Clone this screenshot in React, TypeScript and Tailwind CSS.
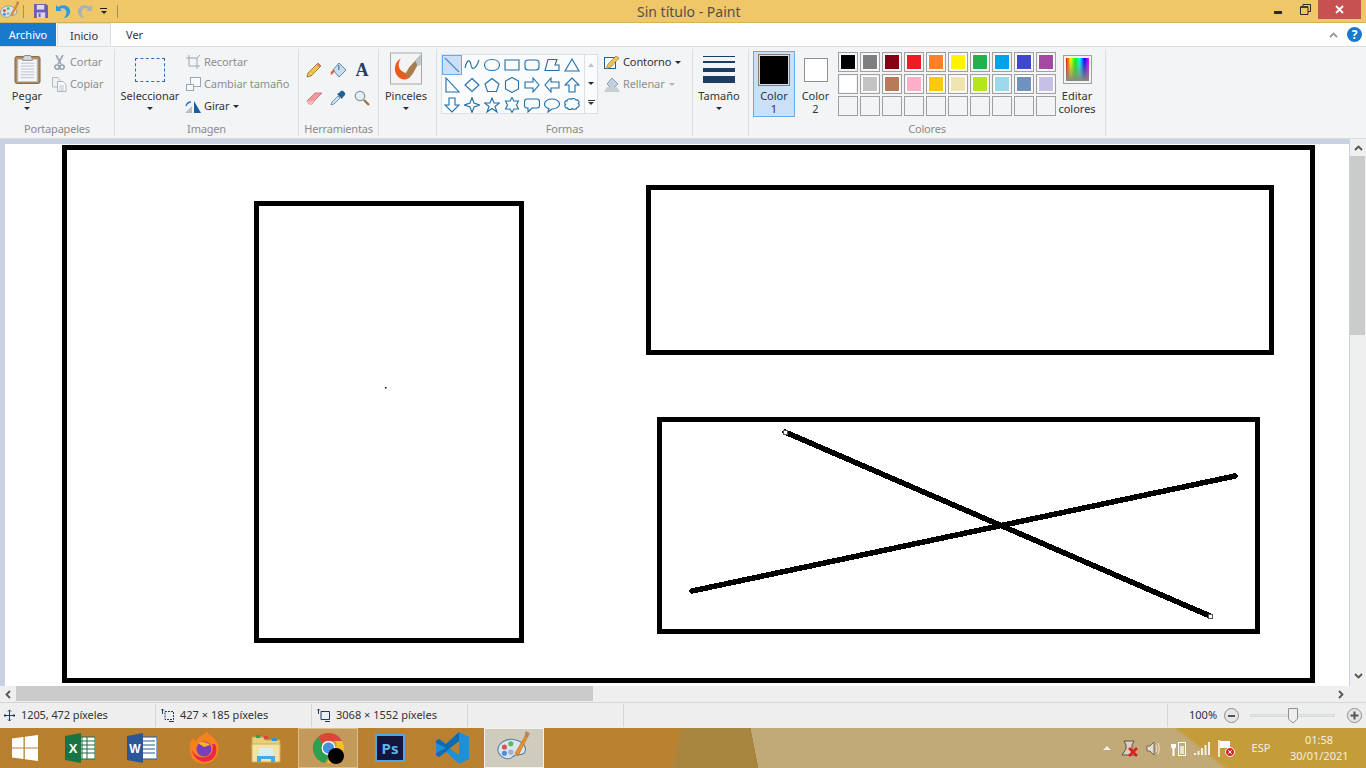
import type { ReactNode } from "react";

const PALETTE_TOP = ["#000000", "#7f7f7f", "#880015", "#ed1c24", "#ff7f27", "#fff200", "#22b14c", "#00a2e8", "#3f48cc", "#a349a4"];
const PALETTE_MID = ["#ffffff", "#c3c3c3", "#b97a57", "#ffaec9", "#ffc90e", "#efe4b0", "#b5e61d", "#99d9ea", "#7092be", "#c8bfe7"];

const SHAPES = [
  "M1 1L15 15",
  "M1 11C3 2 6 2 7 8C8 14 12 12 15 3",
  "M8 2.5C12 2.5 15.5 4.5 15.5 8C15.5 11.5 12 13.5 8 13.5C4 13.5 .5 11.5 .5 8C.5 4.5 4 2.5 8 2.5Z",
  "M1 3H15V13H1Z",
  "M4 3H12Q15 3 15 6V10Q15 13 12 13H4Q1 13 1 10V6Q1 3 4 3Z",
  "M1 13.5L4 2.5H13L11 8H15V13.5Z",
  "M8 2L15 14H1Z",
  "M2 1V15H15Z",
  "M8 1.5L15 8L8 14.5L1 8Z",
  "M8 1.5L15 7L12.5 14.5H3.5L1 7Z",
  "M8 .5L14.5 4V12L8 15.5L1.5 12V4Z",
  "M1 5H9V1L15 8L9 15V11H1Z",
  "M15 5H7V1L1 8L7 15V11H15Z",
  "M8 1L15 8H11V15H5V8H1Z",
  "M5 1H11V8H15L8 15L1 8H5Z",
  "M8 .5L10 6L15.5 8L10 10L8 15.5L6 10L.5 8L6 6Z",
  "M8 1L10 6H15.5L11 9.5L13 15L8 11.5L3 15L5 9.5L.5 6H6Z",
  "M8 .5L10 4H14.5L12.5 8L14.5 12H10L8 15.5L6 12H1.5L3.5 8L1.5 4H6Z",
  "M3 2H13Q15.5 2 15.5 4.5V8.5Q15.5 11 13 11H8L4 15V11H3Q.5 11 .5 8.5V4.5Q.5 2 3 2Z",
  "M8 2C12 2 15.5 4 15.5 7C15.5 10 12 12 8 12L4 15L5 11.5C2.5 11 .5 9 .5 7C.5 4 4 2 8 2Z",
  "M3 4C3 2 6 1 7 2.5C8 1 11 1 12 3C14 2.5 16 5 14.5 6.5C16 8 15 10.5 13 10.5C12.5 12.5 9.5 13 8.5 11.5C7 13 4 13 3.5 11C1.5 11.5 0 9 1.5 7.5C0 6 1 3.5 3 4Z",
];

function Caret({ color = "border-t-[#2b2b2b]" }: { color?: string }) {
  return <span className={`inline-block h-0 w-0 border-x-[3px] border-t-[3px] border-x-transparent ${color}`} />;
}

function Group({ label, width, children }: { label: string; width: string; children: ReactNode }) {
  return (
    <div className={`${width} flex h-[87px] shrink-0 flex-col border-r border-[#dcdddf]`}>
      <div className="flex h-[73px]">{children}</div>
      <div className="text-center text-[11px] leading-[14px] tracking-[-0.2px] text-[#8b8b8b]">{label}</div>
    </div>
  );
}

function LargeButton({ label, width, icon }: { label: string; width: string; icon: ReactNode }) {
  return (
    <div className={`${width} flex shrink-0 flex-col items-center`}>
      <div className="flex h-[40px] items-center justify-center">{icon}</div>
      <div className="h-[14px] text-[11px] leading-[14px] text-[#333333]">{label}</div>
      <div className="flex h-[10px] items-center">
        <Caret />
      </div>
    </div>
  );
}

function SmallRow({ icon, label, muted, caret }: { icon: ReactNode; label: string; muted?: boolean; caret?: boolean }) {
  return (
    <div className="flex h-[22px] items-center">
      <span className="flex w-[16px] shrink-0 items-center justify-center">{icon}</span>
      <span className={`ml-[3px] text-[11px] leading-[14px] tracking-[-0.1px] ${muted ? "text-[#8e8e8e]" : "text-[#333333]"}`}>{label}</span>
      {caret && (
        <span className="ml-[4px] flex items-center">
          <Caret color={muted ? "border-t-[#b5b5b5]" : "border-t-[#2b2b2b]"} />
        </span>
      )}
    </div>
  );
}

function Swatch({ color }: { color?: string }) {
  return (
    <div className="h-[20px] w-[20px] border border-[#a0a0a0] bg-[#f3f4f6] p-px">
      {color && <div className="h-full w-full border border-white" style={{ backgroundColor: color }} />}
    </div>
  );
}

function PaintIcon({ size }: { size: number }) {
  return (
    <svg width={size} height={size} viewBox="0 0 32 32">
      <path d="M1 19C0 12 8 7 15 8C23 9 29 14 26 20C24 24 18 21 15 24C12 28 3 26 1 19Z" fill="#d9e6f0" stroke="#5a7f9e" strokeWidth="1" />
      <circle cx="7" cy="15" r="2.4" fill="#d9534f" />
      <circle cx="13" cy="12" r="2.4" fill="#5cb85c" />
      <circle cx="7" cy="21" r="2.4" fill="#4a90d9" />
      <circle cx="13" cy="20" r="2.6" fill="#9fb4c7" />
      <path d="M17 21L27 4L29 5L20 23Z" fill="#e8912d" stroke="#b5661a" strokeWidth=".6" />
      <path d="M26 5L27 0L31 2L29 6Z" fill="#b8845a" />
    </svg>
  );
}

function ChromeIcon() {
  return (
    <svg width="34" height="34" viewBox="0 0 34 34">
      <g transform="translate(2 0)">
        <path d="M15.5 2A15 15 0 0 1 29 10H16A7 7 0 0 0 9 13L5 6A15 15 0 0 1 15.5 2Z" fill="#d8473a" />
        <path d="M5 6L12 18A7 7 0 0 0 17 23.5L12 32A15 15 0 0 1 5 6Z" fill="#2f9e4f" />
        <path d="M29 10A15 15 0 0 1 14 32L21 20A7 7 0 0 0 22 10Z" fill="#f3c11b" />
        <circle cx="15.5" cy="17" r="6.3" fill="#4a8fe0" stroke="#ffffff" strokeWidth="1.3" />
      </g>
      <circle cx="25" cy="25" r="8" fill="#000000" />
    </svg>
  );
}

export default function App() {
  return (
    <div className="flex h-[768px] w-[1366px] flex-col overflow-hidden bg-white font-['Noto_Sans',sans-serif]">
      {/* Title bar */}
      <div className="flex h-[23px] shrink-0 items-start border-b border-[#d8b058] bg-[#efc768]">
        <div className="flex h-[22px] w-[126px] items-center">
          <PaintIcon size={20} />
          <span className="ml-[3px] h-[13px] w-px bg-[#a89055]" />
          <svg className="ml-[10px]" width="14" height="14" viewBox="0 0 15 15">
            <path d="M0 0H13L15 2V15H0Z" fill="#6a5fb0" />
            <rect x="3" y="1" width="8" height="5" fill="#ddd9ee" />
            <rect x="3" y="9" width="9" height="6" fill="#d7d3ea" />
            <rect x="5" y="10" width="2" height="4" fill="#6a5fb0" />
          </svg>
          <svg className="ml-[8px]" width="15" height="15" viewBox="0 0 15 15">
            <path d="M0 1V7H6L4 5C7 3 12 5 10 11L8 14C13 13 16 8 13 4C10 0 5 1 2 3Z" fill="#2c9be0" />
          </svg>
          <svg className="ml-[6px]" width="15" height="15" viewBox="0 0 15 15">
            <path d="M15 1V7H9L11 5C8 3 3 5 5 11L7 14C2 13 -1 8 2 4C5 0 10 1 13 3Z" fill="#a5b2bb" />
          </svg>
          <span className="ml-[8px] flex flex-col items-center gap-[2px]">
            <span className="h-px w-[7px] bg-[#222222]" />
            <Caret color="border-t-[#222222]" />
          </span>
          <span className="ml-[10px] h-[13px] w-px shrink-0 bg-[#a89055]" />
        </div>
        <div className="h-[22px] flex-1 pl-[511px] text-[14px] leading-[23px] text-[#55504a]">Sin título - Paint</div>
        <div className="flex h-[22px] items-start">
          <span className="mt-[11px] h-[2.5px] w-[8px] bg-[#2b2b2b]" />
          <svg className="ml-[18px] mt-[4px]" width="11" height="11" viewBox="0 0 11 11">
            <path d="M3 2.5V.5H10.5V7.5H8M.5 3H8V10.5H.5Z" fill="none" stroke="#2b2b2b" />
            <path d="M.5 3H8" stroke="#2b2b2b" strokeWidth="1.5" />
          </svg>
          <div className="ml-[7px] mr-[5px] flex h-[19px] w-[43px] items-center justify-center bg-[#c75050]">
            <svg width="9" height="9" viewBox="0 0 9 9">
              <path d="M1 1L8 8M8 1L1 8" stroke="#ffffff" strokeWidth="1.8" />
            </svg>
          </div>
        </div>
      </div>

      {/* Tabs */}
      <div className="flex h-[23px] shrink-0 items-stretch bg-white text-[11px] leading-[23px]">
        <div className="w-[56px] bg-[#1979ca] text-center text-white">Archivo</div>
        <div className="ml-px w-[54px] border-x border-t border-[#dcdddf] bg-[#f3f4f6] text-center text-[#333333]">Inicio</div>
        <div className="ml-[15px] text-[#333333]">Ver</div>
        <div className="flex flex-1 items-center justify-end pr-[4px]">
          <svg width="9" height="6" viewBox="0 0 9 6">
            <path d="M1 5L4.5 1.5L8 5" fill="none" stroke="#9a9a9a" strokeWidth="1.8" />
          </svg>
          <span className="ml-[9px] flex h-[15px] w-[15px] items-center justify-center rounded-full bg-[#1979ca] text-[12px] font-bold leading-[15px] text-white">?</span>
        </div>
      </div>

      {/* Ribbon */}
      <div className="flex h-[93px] shrink-0 border-y border-[#dcdddf] bg-[#f3f4f6] pt-[2px]">
        <Group label="Portapapeles" width="w-[115px]">
          <LargeButton
            label="Pegar"
            width="w-[54px]"
            icon={
              <svg width="27" height="32" viewBox="0 0 28 32">
                <rect x="1" y="3" width="26" height="28" rx="2" fill="#b08a5e" stroke="#86663f" />
                <rect x="4" y="6" width="20" height="23" fill="#f4f6f8" stroke="#c0c8cf" />
                <path d="M7 10H21M7 13H21M7 16H21M7 19H21M7 22H21M7 25H21" stroke="#b9c3cc" />
                <path d="M9 5L11 2H17L19 5V7H9Z" fill="#d5d8da" stroke="#8a8a8a" />
              </svg>
            }
          />
          <div className="-ml-[3px] pt-[2px]">
            <SmallRow
              muted
              label="Cortar"
              icon={
                <svg width="11" height="15" viewBox="0 0 11 15">
                  <path d="M2 0L7 9M9 0L4 9" stroke="#9aa4ad" strokeWidth="1.6" />
                  <circle cx="3" cy="12" r="2.2" fill="none" stroke="#8b97a2" strokeWidth="1.3" />
                  <circle cx="8" cy="12" r="2.2" fill="none" stroke="#8b97a2" strokeWidth="1.3" />
                </svg>
              }
            />
            <SmallRow
              muted
              label="Copiar"
              icon={
                <svg width="15" height="15" viewBox="0 0 15 15">
                  <path d="M.5 .5H6L8 3V10H.5Z" fill="#eef1f4" stroke="#b3bdc6" />
                  <path d="M5.5 4.5H11L14 7.5V14.5H5.5Z" fill="#f7f9fa" stroke="#a9b4be" />
                  <path d="M7 9H12M7 11H12M7 13H12" stroke="#c0c8cf" />
                </svg>
              }
            />
          </div>
        </Group>

        <Group label="Imagen" width="w-[184px]">
          <LargeButton
            label="Seleccionar"
            width="w-[70px]"
            icon={<div className="mt-[2px] h-[24px] w-[30px] border border-dashed border-[#2a6db0]" />}
          />
          <div className="pt-[2px]">
            <SmallRow
              muted
              label="Recortar"
              icon={
                <svg width="14" height="14" viewBox="0 0 14 14">
                  <path d="M3 0V11H14M0 3H11V14M11 3L14 0" fill="none" stroke="#9aa8b5" />
                </svg>
              }
            />
            <SmallRow
              muted
              label="Cambiar tamaño"
              icon={
                <svg width="15" height="14" viewBox="0 0 15 14">
                  <rect x="4.5" y=".5" width="10" height="9" fill="#f8f9fa" stroke="#9aa8b5" />
                  <rect x=".5" y="7.5" width="7" height="6" fill="#f8f9fa" stroke="#9aa8b5" />
                </svg>
              }
            />
            <SmallRow
              caret
              label="Girar"
              icon={
                <svg width="16" height="13" viewBox="0 0 16 13">
                  <path d="M0 13L7 6V13Z" fill="#b9bdc1" />
                  <path d="M9 13V1L16 13Z" fill="#1c5f9e" />
                  <path d="M1 6C2 3 4 2 6 2" fill="none" stroke="#1c7cd0" strokeWidth="1.4" />
                </svg>
              }
            />
          </div>
        </Group>

        <Group label="Herramientas" width="w-[80px]">
          <div className="grid h-[56px] grid-cols-[repeat(3,24px)] grid-rows-[repeat(2,28px)] place-items-center pl-[3px] pt-[7px]">
            <svg width="16" height="16" viewBox="0 0 16 16">
              <path d="M1 15L2 11L12 1L15 4L5 14Z" fill="#f2c14e" stroke="#8a6a24" strokeWidth=".8" />
              <path d="M12 1L15 4L13.5 5.5L10.5 2.5Z" fill="#e07a6a" />
            </svg>
            <svg width="17" height="17" viewBox="0 0 17 17">
              <path d="M9 1L16 8L9 15L3 8Z" fill="#c8ddf0" stroke="#5b8cb5" />
              <path d="M3 8C1 9 0 11 1 13C3 12 4 10 5 8Z" fill="#e8622c" />
              <rect x="8" y="3" width="1.5" height="5" fill="#5b8cb5" />
            </svg>
            <span className="font-['Liberation_Serif',serif] text-[18px] font-bold leading-[18px] text-[#1f3f66]">A</span>
            <svg width="17" height="13" viewBox="0 0 17 13">
              <path d="M1 9L9 1H16L8 9L6 12H3Z" fill="#f09a9a" stroke="#c96b6b" strokeWidth=".8" />
              <path d="M1 9H8L6 12H3Z" fill="#f6bcbc" />
            </svg>
            <svg width="16" height="16" viewBox="0 0 16 16">
              <path d="M1 15L2 12L8 6L10 8L4 14Z" fill="#cfe2f0" stroke="#5a7f9e" strokeWidth=".8" />
              <path d="M7 4L12 9L13 7L15 5C16 3 13 0 11 1L9 3Z" fill="#1f5f9a" />
            </svg>
            <svg width="16" height="16" viewBox="0 0 16 16">
              <circle cx="6" cy="6" r="4.7" fill="#e3eef6" stroke="#8c9aa5" strokeWidth="1.3" />
              <path d="M10 10L15 15" stroke="#9c6f42" strokeWidth="2.2" />
            </svg>
          </div>
        </Group>

        <Group label="" width="w-[58px]">
          <LargeButton
            label="Pinceles"
            width="w-[54px]"
            icon={
              <svg className="mt-[-1px]" width="32" height="33" viewBox="0 0 32 32">
                <rect x=".5" y=".5" width="31" height="31" fill="#f4f4f4" stroke="#a8a8a8" />
                <path d="M11 6C5 9 3 17 7 23C10 27 15 28 18 26C22 22 15 21 11 18C8 15 8 10 11 6Z" fill="#ea5b1f" />
                <path d="M15 22L19 15L30 3L31 6L23 21L19 26Z" fill="#a97d4c" />
                <path d="M25 8L31 2V12L28 14Z" fill="#bfc6cc" />
              </svg>
            }
          />
        </Group>

        <Group label="Formas" width="w-[256px]">
          <div className="ml-[4px] mt-[5px] flex h-[60px] w-[157px] shrink-0 border border-[#dcdfe3] bg-[#f9fbfd]">
            <div className="grid w-[142px] grid-cols-[repeat(7,20px)] grid-rows-[repeat(3,20px)]">
              {SHAPES.map((d, i) => (
                <div
                  key={i}
                  className={`flex items-center justify-center ${i === 0 ? "border border-[#6aa8e8] bg-[#c9e0f7]" : ""}`}
                >
                  <svg width="16" height="16" viewBox="0 0 16 16">
                    <path d={d} fill="none" stroke={i === 0 ? "#4d86bd" : "#1f6fa8"} strokeWidth="1.1" />
                  </svg>
                </div>
              ))}
            </div>
            <div className="flex flex-1 flex-col items-center justify-around border-l border-[#dcdfe3]">
              <span className="h-0 w-0 border-x-[3px] border-b-[4px] border-x-transparent border-b-[#c4c4c4]" />
              <Caret />
              <span className="flex flex-col items-center gap-px">
                <span className="h-px w-[7px] bg-[#333333]" />
                <Caret color="border-t-[#333333]" />
              </span>
            </div>
          </div>
          <div className="ml-[6px] pt-[2px]">
            <SmallRow
              caret
              label="Contorno"
              icon={
                <svg width="16" height="15" viewBox="0 0 16 15">
                  <rect x=".5" y="2.5" width="11" height="11" fill="#fbfbfb" stroke="#1f5f9a" />
                  <path d="M2 14L4 9L12 1L15 3L7 12Z" fill="#f2c14e" stroke="#8a6a24" strokeWidth=".6" />
                </svg>
              }
            />
            <SmallRow
              muted
              caret
              label="Rellenar"
              icon={
                <svg width="16" height="15" viewBox="0 0 16 15">
                  <path d="M8 1L14 7L8 12L3 7Z" fill="#c2d1de" stroke="#8a9fb2" />
                  <path d="M0 15L3 10H13L16 15Z" fill="#c9ced3" />
                </svg>
              }
            />
          </div>
        </Group>

        <Group label="" width="w-[56px]">
          <LargeButton
            label="Tamaño"
            width="w-[52px]"
            icon={
              <div className="flex w-[32px] flex-col">
                <span className="h-px bg-[#1d3c60]" />
                <span className="mt-[4px] h-[2px] bg-[#1d3c60]" />
                <span className="mt-[5px] h-[4px] bg-[#1d3c60]" />
                <span className="mt-[4px] h-[7px] bg-[#1d3c60]" />
              </div>
            }
          />
        </Group>

        <Group label="Colores" width="w-[357px]">
          <div className="ml-[4px] mt-[2px] flex h-[66px] w-[42px] shrink-0 flex-col items-center border border-[#6aa8e8] bg-[#c9e0f7] pt-[2px]">
            <div className="h-[32px] w-[32px] border border-[#7d7d7d] p-px">
              <div className="h-full w-full bg-black" />
            </div>
            <div className="mt-[3px] text-center text-[11px] leading-[13px] text-[#333333]">
              Color
              <br />1
            </div>
          </div>
          <div className="mt-[9px] flex w-[41px] shrink-0 flex-col items-center">
            <div className="h-[24px] w-[24px] border border-[#8f8f8f] bg-white" />
            <div className="mt-[7px] text-center text-[11px] leading-[13px] text-[#333333]">
              Color
              <br />2
            </div>
          </div>
          <div className="ml-[2px] mt-[3px] grid grid-cols-[repeat(10,20px)] grid-rows-[repeat(3,20px)] gap-[2px]">
            {PALETTE_TOP.concat(PALETTE_MID).map((c) => (
              <Swatch key={c} color={c} />
            ))}
            {PALETTE_TOP.map((c) => (
              <Swatch key={`empty-${c}`} />
            ))}
          </div>
          <div className="mt-[6px] flex w-[42px] shrink-0 flex-col items-center">
            <div className="h-[29px] w-[29px] border border-[#a0a0a0] p-[2px]">
              <div className="h-full w-full bg-[linear-gradient(to_bottom,transparent,#8a8a7a),linear-gradient(to_right,#ff0000,#ffff00,#00ff00,#00ffff,#0000ff,#ff00ff)]" />
            </div>
            <div className="mt-[5px] text-center text-[11px] leading-[13px] text-[#333333]">
              Editar
              <br />
              colores
            </div>
          </div>
        </Group>
      </div>

      {/* Canvas area */}
      <div className="flex h-[547px] shrink-0">
        <div className="flex-1 bg-[#c9d2e2] pl-[5px] pt-[5px]">
          <div className="h-full w-[1344px] bg-white">
            <svg width="1344" height="542" viewBox="5 144 1344 542" className="block">
              <g fill="none" stroke="#000000" strokeWidth="5" shapeRendering="crispEdges">
                <rect x="64.5" y="147.5" width="1248" height="533" />
                <rect x="256.5" y="203.5" width="265" height="437" />
                <rect x="648.5" y="187.5" width="623" height="165" />
                <rect x="659.5" y="419.5" width="598" height="212" />
              </g>
              <g stroke="#000000" strokeWidth="5.5" strokeLinecap="round" shapeRendering="crispEdges">
                <line x1="785" y1="432" x2="1210" y2="616" />
                <line x1="692" y1="591" x2="1235" y2="476" />
              </g>
              <rect x="783" y="430.5" width="4" height="4" fill="#ffffff" stroke="#555555" shapeRendering="crispEdges" />
              <rect x="1208.5" y="614.5" width="4" height="4" fill="#ffffff" stroke="#555555" shapeRendering="crispEdges" />
              <rect x="385" y="387" width="1.5" height="1.5" fill="#000000" />
            </svg>
          </div>
        </div>
        <div className="flex w-[16px] shrink-0 flex-col bg-[#efefef]">
          <div className="flex h-[17px] items-center justify-center">
            <svg width="9" height="6" viewBox="0 0 9 6">
              <path d="M1 5L4.5 1.5L8 5" fill="none" stroke="#555555" strokeWidth="1.8" />
            </svg>
          </div>
          <div className="h-[179px] w-[15px] bg-[#cbcbcb]" />
          <div className="flex flex-1 items-end justify-center pb-[7px]">
            <svg width="9" height="6" viewBox="0 0 9 6">
              <path d="M1 1L4.5 4.5L8 1" fill="none" stroke="#555555" strokeWidth="1.8" />
            </svg>
          </div>
        </div>
      </div>

      {/* Horizontal scrollbar */}
      <div className="flex h-[16px] shrink-0 items-center bg-[#efefef]">
        <div className="flex w-[16px] items-center justify-center">
          <svg width="6" height="9" viewBox="0 0 6 9">
            <path d="M5 1L1.5 4.5L5 8" fill="none" stroke="#555555" strokeWidth="1.8" />
          </svg>
        </div>
        <div className="h-[15px] w-[577px] self-start bg-[#cbcbcb]" />
        <div className="flex flex-1 justify-end pr-[22px]">
          <svg width="6" height="9" viewBox="0 0 6 9">
            <path d="M1 1L4.5 4.5L1 8" fill="none" stroke="#555555" strokeWidth="1.8" />
          </svg>
        </div>
      </div>

      {/* Status bar */}
      <div className="flex h-[26px] shrink-0 items-center border-t border-[#d6d6d6] bg-[#eeeeee] text-[11px] text-[#333333]">
        <div className="flex h-[23px] w-[156px] items-center border-r border-[#d6d6d6] pl-[4px]">
          <svg width="11" height="11" viewBox="0 0 11 11">
            <path d="M5.5 0V11M0 5.5H11M4 1.5L5.5 0L7 1.5M4 9.5L5.5 11L7 9.5M1.5 4L0 5.5L1.5 7M9.5 4L11 5.5L9.5 7" fill="none" stroke="#1d3c60" />
          </svg>
          <span className="ml-[6px] tracking-[-0.1px]">1205, 472 píxeles</span>
        </div>
        <div className="flex h-[23px] w-[156px] items-center border-r border-[#d6d6d6] pl-[5px]">
          <svg width="13" height="13" viewBox="0 0 13 13">
            <path d="M4 2.5H12.5V10.5H4Z" fill="none" stroke="#1d3c60" strokeDasharray="2 1" />
            <path d="M1.5 0V5M0 1.5L1.5 0L3 1.5M8 12.5H13" fill="none" stroke="#1d3c60" />
          </svg>
          <span className="ml-[6px]">427 × 185 píxeles</span>
        </div>
        <div className="flex h-[23px] w-[156px] items-center border-r border-[#d6d6d6] pl-[5px]">
          <svg width="13" height="13" viewBox="0 0 13 13">
            <path d="M4 2.5H12.5V10.5H4Z" fill="none" stroke="#1d3c60" />
            <path d="M1.5 0V5M0 1.5L1.5 0L3 1.5M8 12.5H13" fill="none" stroke="#1d3c60" />
          </svg>
          <span className="ml-[6px]">3068 × 1552 píxeles</span>
        </div>
        <div className="h-[23px] w-[156px] border-r border-[#d6d6d6]" />
        <div className="h-[23px] w-[544px] border-r border-[#d6d6d6]" />
        <div className="flex h-[23px] flex-1 items-center pl-[21px]">
          <span className="w-[28px] text-[#2b2b55]">100%</span>
          <span className="ml-[7px] flex h-[15px] w-[15px] items-center justify-center rounded-full border border-[#8f8f8f] bg-[#e6e6e6]">
            <span className="h-[2px] w-[7px] bg-[#555555]" />
          </span>
          <span className="ml-[11px] flex h-[3px] w-[85px] items-start justify-center border border-[#d4dbd8] bg-[#e6e9e8]">
            <svg className="-mt-[7px]" width="10" height="16" viewBox="0 0 10 16">
              <path d="M.5 .5H9.5V11L5 15L.5 11Z" fill="#eeeeee" stroke="#8f8f8f" />
            </svg>
          </span>
          <span className="ml-[12px] flex h-[15px] w-[15px] items-center justify-center rounded-full border border-[#8f8f8f] bg-[#e6e6e6]">
            <svg width="9" height="9" viewBox="0 0 9 9">
              <path d="M4.5 .5V8.5M.5 4.5H8.5" stroke="#555555" strokeWidth="2" />
            </svg>
          </span>
        </div>
      </div>

      {/* Taskbar */}
      <div className="flex h-[40px] shrink-0 items-stretch bg-[linear-gradient(39deg,transparent_86.3%,#c59c3a_86.8%),linear-gradient(78.7deg,transparent_55.2%,#c2aa78_55.2%),linear-gradient(102.7deg,transparent_49.3%,#a8853f_49.8%),linear-gradient(90deg,#b8802e,#bc8331)]">
        <div className="flex w-[50px] items-center pl-[12px]">
          <svg width="26" height="26" viewBox="0 0 26 26">
            <path d="M0 3.6L11.5 2V12.4H0ZM12.8 1.8L26 0V12.4H12.8ZM0 13.6H11.5V24L0 22.4ZM12.8 13.6H26V26L12.8 24.2Z" fill="#ffffff" />
          </svg>
        </div>
        <div className="flex gap-[2px]">
          <div className="flex w-[60px] items-center justify-center">
            <svg width="30" height="30" viewBox="0 0 30 30">
              <rect x="12" y="4" width="18" height="22" fill="#ffffff" stroke="#1a7343" />
              <path d="M17 4V26M22 4V26M12 8H30M12 12H30M12 16H30M12 20H30" stroke="#1a7343" />
              <path d="M0 3L16 0V30L0 27Z" fill="#1a7343" />
              <text x="8" y="20" textAnchor="middle" fontSize="13" fontWeight="700" fill="#ffffff" fontFamily="Liberation Sans">X</text>
            </svg>
          </div>
          <div className="flex w-[60px] items-center justify-center">
            <svg width="30" height="30" viewBox="0 0 30 30">
              <rect x="12" y="4" width="18" height="22" fill="#ffffff" stroke="#2b579a" />
              <path d="M16 8H28M16 12H28M16 16H28M16 20H28" stroke="#2b579a" />
              <path d="M0 3L16 0V30L0 27Z" fill="#2b579a" />
              <text x="8" y="20" textAnchor="middle" fontSize="12" fontWeight="700" fill="#ffffff" fontFamily="Liberation Sans">W</text>
            </svg>
          </div>
          <div className="flex w-[60px] items-center justify-center">
            <svg width="32" height="34" viewBox="0 0 32 34">
              <path d="M2 18C1 13 3 9 6 7C6 9 7 10 8 10C10 6 13 5 15 4C17 2 19 1 19 0C20 5 25 4 29 11C32 16 31 24 26 29C20 34 10 34 5 28C3 25 2 22 2 18Z" fill="#f5821f" />
              <path d="M27 13C30 19 28 27 21 30C13 33 5 27 4 19C8 28 20 29 24 21C25 18 25 15 24 13Z" fill="#e8274b" />
              <circle cx="16" cy="18" r="7.5" fill="#7a3fb8" />
              <path d="M10 12C14 10 19 11 22 14L16 16Z" fill="#f5b31f" />
            </svg>
          </div>
          <div className="flex w-[60px] items-center justify-center">
            <svg width="30" height="32" viewBox="0 0 30 32">
              <path d="M1 5H12L14 8H29V17H1Z" fill="#e8cf7c" stroke="#bda24e" />
              <rect x="5" y="3" width="4" height="3" fill="#2f9e4f" />
              <rect x="13" y="4" width="4" height="3" fill="#d8473a" />
              <rect x="21" y="6" width="5" height="3" fill="#3f8fd0" />
              <path d="M1 12H29V30H1Z" fill="#f4e3a2" stroke="#cbb060" />
              <path d="M6 24H24V30H20V27H10V30H6Z" fill="#4aa8d8" />
              <rect x="8" y="16" width="14" height="8" fill="#d7eef7" />
            </svg>
          </div>
          <div className="flex w-[60px] items-center justify-center border border-[#d9bd8d] bg-[#c39a5a]">
            <ChromeIcon />
          </div>
          <div className="flex w-[60px] items-center justify-center">
            <div className="flex h-[28px] w-[30px] items-center justify-center border-2 border-[#4fa6e8] bg-[#14153a] text-[15px] font-bold leading-none text-[#5fb4f0]">Ps</div>
          </div>
          <div className="flex w-[60px] items-center justify-center">
            <svg width="33" height="32" viewBox="0 0 33 32">
              <path d="M23 0L33 5V27L23 32L10 20L3 25L0 23V9L3 7L10 12ZM23 9L13 16L23 23Z" fill="#1f8fd6" />
              <path d="M23 0V9L3 25L0 23V21L10 16L0 11V9L3 7L10 12Z" fill="#0e6bb0" />
            </svg>
          </div>
          <div className="flex w-[60px] items-center justify-center border border-[#f4f2ec] bg-[#cfcbbd]">
            <PaintIcon size={34} />
          </div>
        </div>
        <div className="flex flex-1 items-center justify-end">
          <span className="h-0 w-0 border-x-[4px] border-b-[4px] border-x-transparent border-b-[#eeeeee]" />
          <svg className="ml-[10px]" width="18" height="17" viewBox="0 0 18 17">
            <path d="M3 1H13L11 5V9L15 15H1L5 9V5Z" fill="#d9d2c4" stroke="#5c5346" />
            <path d="M8 8L16 16M16 8L8 16" stroke="#e02020" strokeWidth="2.6" />
          </svg>
          <svg className="ml-[7px]" width="15" height="15" viewBox="0 0 15 15">
            <path d="M1 5H4L8 1V14L4 10H1Z" fill="#e4dfd3" stroke="#6f6758" />
            <path d="M10 4Q12 7.5 10 11M12 2Q15 7.5 12 13" fill="none" stroke="#ebe6da" />
          </svg>
          <svg className="ml-[10px]" width="15" height="16" viewBox="0 0 15 16">
            <path d="M1 0V4M4 0V4M0 4H5V7L3.5 9V16H1.5V9L0 7Z" fill="#ffffff" />
            <rect x="7.5" y="2.5" width="7" height="13" fill="none" stroke="#ffffff" />
            <rect x="9" y="6" width="4" height="8" fill="#e8e2d0" />
          </svg>
          <svg className="ml-[8px]" width="16" height="13" viewBox="0 0 16 13">
            <path d="M0 11H2V13H0ZM3.5 9H5.5V13H3.5ZM7 6H9V13H7ZM10.5 3H12.5V13H10.5ZM14 0H16V13H14Z" fill="#f4efe2" />
          </svg>
          <svg className="ml-[8px]" width="17" height="17" viewBox="0 0 17 17">
            <path d="M1 0V17" stroke="#ffffff" strokeWidth="1.5" />
            <path d="M2 1H12V8H2Z" fill="#ffffff" />
            <circle cx="12" cy="12" r="4.5" fill="#e02020" stroke="#ffffff" />
            <path d="M10.2 10.2L13.8 13.8M13.8 10.2L10.2 13.8" stroke="#ffffff" />
          </svg>
          <span className="ml-[16px] w-[20px] text-center text-[11px] text-[#f4efe2]">ESP</span>
          <div className="ml-[19px] mr-[18px] w-[58px] text-center text-[11px] leading-[16px] text-[#f4efe2]">
            01:58
            <br />
            30/01/2021
          </div>
        </div>
      </div>
    </div>
  );
}
